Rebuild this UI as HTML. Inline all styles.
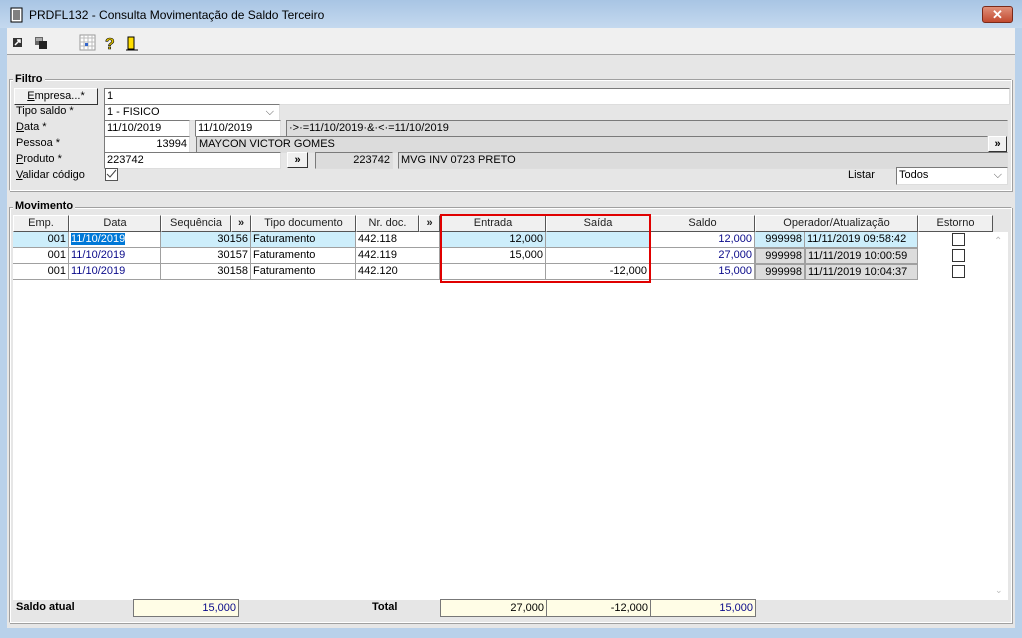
<!DOCTYPE html>
<html><head><meta charset="utf-8"><style>
*{box-sizing:border-box;margin:0;padding:0}
body{width:1022px;height:638px;position:relative;overflow:hidden;background:#b9d1ea;font-family:"Liberation Sans",sans-serif;font-size:11px;color:#000}
.a{position:absolute}
.in{position:absolute;background:#fff;border:1px solid #7a7a7a;border-right-color:#ddd;border-bottom-color:#ddd;height:17px;line-height:15px;padding:0 2px;white-space:nowrap;overflow:hidden}
.gr{background:#dcdcdc}
.btn{position:absolute;background:#f0f0f0;border:1px solid;border-color:#fff #333 #333 #fff;text-align:center;line-height:14px}
.lbl{position:absolute;line-height:14px}
.hd{position:absolute;top:215px;height:17px;background:#f0f0f0;border:1px solid;border-color:#fff #555 #555 #fff;text-align:center;line-height:15px;color:#222}
.c{position:absolute;height:16px;line-height:15px;border-right:1px solid #a0a0a0;border-bottom:1px solid #a0a0a0;padding:0 2px;white-space:nowrap;overflow:hidden}
.r{text-align:right}
.bl{color:#0a0a8a}
.sel{background:#cdeefb}
.op{background:#dcdcdc;border:1px solid #a0a0a0}
.cb{position:absolute;width:13px;height:13px;border:1px solid #333;background:#fff}
.grp{position:absolute;border:1px solid #a0a0a0;border-right-color:#fff;border-bottom-color:#fff;box-shadow:inset 1px 1px 0 #fff, 1px 1px 0 #a0a0a0}
.gt{position:absolute;background:#e6e6e6;font-weight:bold;padding:0 2px;line-height:12px}
.tot{position:absolute;top:599px;height:18px;background:#fffde6;border:1px solid #777;text-align:right;padding:0 2px;line-height:16px;font-family:"Liberation Sans Narrow","Liberation Sans",sans-serif}
</style></head><body>
<!-- title bar -->
<div class="a" style="left:0;top:0;width:1022px;height:28px;background:linear-gradient(#a8c5e4,#c4d9ef)"></div>
<svg class="a" style="left:10px;top:7px" width="14" height="16"><rect x="1" y="1" width="11" height="14" fill="#fff" stroke="#000"/><path d="M3 4h7M3 6h7M3 8h7M3 10h7M3 12h7" stroke="#000"/></svg>
<div class="a" style="left:29px;top:8px;font-size:12px;color:#000">PRDFL132 - Consulta Movimentação de Saldo Terceiro</div>
<div class="a" style="left:982px;top:6px;width:31px;height:17px;background:linear-gradient(#e0907a,#c24a30);border:1px solid #7a2a1a;border-radius:3px;color:#fff;font-weight:bold;text-align:center;line-height:15px;font-size:13px">✕</div>
<!-- client -->
<div class="a" style="left:7px;top:28px;width:1008px;height:600px;background:#e6e6e6"></div>
<div class="a" style="left:7px;top:28px;width:1008px;height:27px;background:#f0f0f0;border-bottom:1px solid #a0a0a0"></div>
<svg class="a" style="left:12px;top:36px" width="60" height="14"><rect x="1" y="2" width="9" height="9" fill="#333"/><path d="M3 9l5-5M5 4h3v3" stroke="#fff" stroke-width="1.5" fill="none"/><rect x="23" y="1" width="8" height="8" fill="#666"/><rect x="27" y="5" width="8" height="8" fill="#222"/><rect x="24" y="2" width="6" height="3" fill="#aaa"/></svg>
<svg class="a" style="left:79px;top:34px" width="70" height="18"><rect x="1" y="1" width="15" height="15" fill="#fff" stroke="#999"/><path d="M1 4h15M1 8h15M1 12h15M5 1v15M9 1v15M13 1v15" stroke="#bbb"/><rect x="6" y="9" width="3" height="3" fill="#36c"/><text x="26" y="15" font-size="16" font-weight="bold" fill="#e6c800" stroke="#000" stroke-width="0.6" font-family="Liberation Sans">?</text><rect x="49" y="3" width="6" height="12" fill="#ffde00" stroke="#000"/><path d="M47 16h12M55 3v13" stroke="#000"/></svg>
<!-- Filtro -->
<div class="grp" style="left:9px;top:79px;width:1003px;height:112px"></div>
<div class="gt" style="left:13px;top:73px">Filtro</div>
<div class="btn" style="left:14px;top:88px;width:84px;height:17px"><u>E</u>mpresa...*</div>
<div class="in" style="left:104px;top:88px;width:906px">1</div>
<div class="lbl" style="left:16px;top:104px">Tipo saldo *</div>
<div class="in" style="left:104px;top:104px;width:176px">1 - FISICO<span style="position:absolute;right:5px;top:0;color:#555">⌵</span></div>
<div class="lbl" style="left:16px;top:120px"><u>D</u>ata *</div>
<div class="in" style="left:104px;top:120px;width:86px">11/10/2019</div>
<div class="in" style="left:195px;top:120px;width:86px">11/10/2019</div>
<div class="in gr" style="left:286px;top:120px;width:722px">·&gt;·=11/10/2019·&amp;·&lt;·=11/10/2019</div>
<div class="lbl" style="left:16px;top:136px">Pessoa *</div>
<div class="in r" style="left:104px;top:136px;width:86px">13994</div>
<div class="in gr" style="left:196px;top:136px;width:792px">MAYCON VICTOR GOMES</div>
<div class="btn" style="left:988px;top:136px;width:19px;height:16px;font-weight:bold">»</div>
<div class="lbl" style="left:16px;top:152px"><u>P</u>roduto *</div>
<div class="in" style="left:104px;top:152px;width:177px">223742</div>
<div class="btn" style="left:287px;top:152px;width:21px;height:16px;font-weight:bold">»</div>
<div class="in gr r" style="left:315px;top:152px;width:78px">223742</div>
<div class="in gr" style="left:398px;top:152px;width:610px">MVG INV 0723 PRETO</div>
<div class="lbl" style="left:16px;top:168px"><u>V</u>alidar código</div>
<div class="cb" style="left:105px;top:168px;border-color:#555"><svg width="11" height="11" style="position:absolute;left:0;top:0"><path d="M1 5l3 3 6-7" stroke="#444" fill="none"/></svg></div>
<div class="lbl" style="left:848px;top:168px">Listar</div>
<div class="in" style="left:896px;top:167px;width:112px;height:18px">Todos<span style="position:absolute;right:5px;top:0;color:#555">⌵</span></div>
<!-- Movimento -->
<div class="grp" style="left:9px;top:207px;width:1003px;height:416px"></div>
<div class="gt" style="left:13px;top:200px">Movimento</div>
<div class="a" style="left:13px;top:232px;width:995px;height:368px;background:#fff"></div>
<div class="hd" style="left:13px;width:56px">Emp.</div>
<div class="hd" style="left:69px;width:92px">Data</div>
<div class="hd" style="left:161px;width:70px">Sequência</div>
<div class="hd" style="left:231px;width:20px;font-weight:bold">»</div>
<div class="hd" style="left:251px;width:105px">Tipo documento</div>
<div class="hd" style="left:356px;width:63px">Nr. doc.</div>
<div class="hd" style="left:419px;width:21px;font-weight:bold">»</div>
<div class="hd" style="left:440px;width:106px">Entrada</div>
<div class="hd" style="left:546px;width:104px">Saída</div>
<div class="hd" style="left:650px;width:105px">Saldo</div>
<div class="hd" style="left:755px;width:163px">Operador/Atualização</div>
<div class="hd" style="left:918px;width:75px">Estorno</div>
<!-- rows -->
<div class="c r sel" style="left:13px;top:232px;width:56px">001</div>
<div class="c" style="left:69px;top:232px;width:92px"><span style="background:#0078d7;color:#fff">11/10/2019</span></div>
<div class="c r sel" style="left:161px;top:232px;width:90px">30156</div>
<div class="c sel" style="left:251px;top:232px;width:105px">Faturamento</div>
<div class="c" style="left:356px;top:232px;width:84px">442.118</div>
<div class="c r sel" style="left:440px;top:232px;width:106px">12,000</div>
<div class="c sel" style="left:546px;top:232px;width:104px"></div>
<div class="c r bl" style="left:650px;top:232px;width:105px">12,000</div>
<div class="c r sel" style="left:755px;top:232px;width:50px">999998</div>
<div class="c sel" style="left:805px;top:232px;width:113px">11/11/2019 09:58:42</div>
<div class="cb" style="left:952px;top:233px"></div>

<div class="c r" style="left:13px;top:248px;width:56px">001</div>
<div class="c bl" style="left:69px;top:248px;width:92px">11/10/2019</div>
<div class="c r" style="left:161px;top:248px;width:90px">30157</div>
<div class="c" style="left:251px;top:248px;width:105px">Faturamento</div>
<div class="c" style="left:356px;top:248px;width:84px">442.119</div>
<div class="c r" style="left:440px;top:248px;width:106px">15,000</div>
<div class="c" style="left:546px;top:248px;width:104px"></div>
<div class="c r bl" style="left:650px;top:248px;width:105px">27,000</div>
<div class="c r op" style="left:755px;top:248px;width:50px">999998</div>
<div class="c op" style="left:805px;top:248px;width:113px">11/11/2019 10:00:59</div>
<div class="cb" style="left:952px;top:249px"></div>

<div class="c r" style="left:13px;top:264px;width:56px">001</div>
<div class="c bl" style="left:69px;top:264px;width:92px">11/10/2019</div>
<div class="c r" style="left:161px;top:264px;width:90px">30158</div>
<div class="c" style="left:251px;top:264px;width:105px">Faturamento</div>
<div class="c" style="left:356px;top:264px;width:84px">442.120</div>
<div class="c r" style="left:440px;top:264px;width:106px"></div>
<div class="c r" style="left:546px;top:264px;width:104px">-12,000</div>
<div class="c r bl" style="left:650px;top:264px;width:105px">15,000</div>
<div class="c r op" style="left:755px;top:264px;width:50px">999998</div>
<div class="c op" style="left:805px;top:264px;width:113px">11/11/2019 10:04:37</div>
<div class="cb" style="left:952px;top:265px"></div>
<!-- red box -->
<div class="a" style="left:440px;top:214px;width:211px;height:69px;border:2px solid #e00000"></div>
<!-- scrollbar -->
<div class="a" style="left:994px;top:236px;color:#bbb;font-size:10px">⌃</div>
<div class="a" style="left:995px;top:585px;color:#bbb;font-size:9px">⌄</div>
<!-- totals -->
<div class="a" style="left:16px;top:601px;font-weight:bold">Saldo atual</div>
<div class="tot bl" style="left:133px;width:106px">15,000</div>
<div class="a" style="left:372px;top:601px;font-weight:bold">Total</div>
<div class="tot" style="left:440px;width:107px">27,000</div>
<div class="tot" style="left:546px;width:105px">-12,000</div>
<div class="tot bl" style="left:650px;width:106px">15,000</div>
</body></html>
